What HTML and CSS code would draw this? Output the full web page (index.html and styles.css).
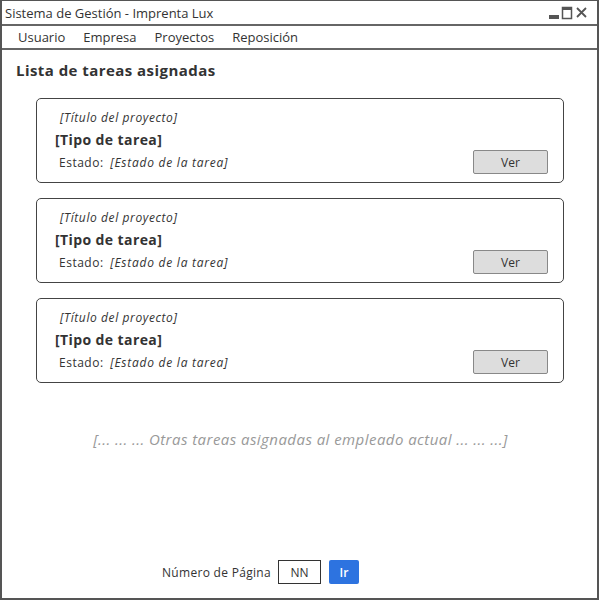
FILE: index.html
```html
<!DOCTYPE html>
<html lang="es">
<head>
<meta charset="utf-8">
<title>Sistema de Gestión - Imprenta Lux</title>
<link rel="stylesheet" href="styles.css">
</head>
<body>
<div class="window">
  <div class="titlebar">
    <span class="title">Sistema de Gestión - Imprenta Lux</span>
    <div class="controls">
      <svg width="48" height="14" viewBox="0 0 48 14">
        <rect x="2" y="9" width="10" height="4" fill="#555"/>
        <rect x="15.5" y="1.5" width="9" height="11" fill="none" stroke="#555" stroke-width="1.5"/>
        <rect x="15" y="1" width="10" height="3" fill="#555"/>
        <path d="M30 2 L39 11 M39 2 L30 11" stroke="#555" stroke-width="1.8"/>
      </svg>
    </div>
  </div>
  <nav class="menubar">
    <span class="menu-item">Usuario</span>
    <span class="menu-item">Empresa</span>
    <span class="menu-item">Proyectos</span>
    <span class="menu-item">Reposición</span>
  </nav>
  <main class="content">
    <h1 class="heading">Lista de tareas asignadas</h1>
    <div class="cards">
      <div class="card">
        <div class="project">[Título del proyecto]</div>
        <div class="task">[Tipo de tarea]</div>
        <div class="row">
          <div class="state"><span class="label">Estado:</span> <em>[Estado de la tarea]</em></div>
          <button class="btn">Ver</button>
        </div>
      </div>
      <div class="card">
        <div class="project">[Título del proyecto]</div>
        <div class="task">[Tipo de tarea]</div>
        <div class="row">
          <div class="state"><span class="label">Estado:</span> <em>[Estado de la tarea]</em></div>
          <button class="btn">Ver</button>
        </div>
      </div>
      <div class="card">
        <div class="project">[Título del proyecto]</div>
        <div class="task">[Tipo de tarea]</div>
        <div class="row">
          <div class="state"><span class="label">Estado:</span> <em>[Estado de la tarea]</em></div>
          <button class="btn">Ver</button>
        </div>
      </div>
    </div>
    <p class="more">[... ... ... Otras tareas asignadas al empleado actual ... ... ...]</p>
    <div class="pager">
      <span class="pager-label">Número de Página</span>
      <span class="page-box">NN</span>
      <button class="go">Ir</button>
    </div>
  </main>
</div>
</body>
</html>
```
FILE: styles.css
```css
* { box-sizing: border-box; }
html, body { margin: 0; padding: 0; background: #fff; }
body {
  font-family: "Open Sans", "Noto Sans", sans-serif;
  color: #333;
}
.window {
  width: 599px;
  height: 600px;
  border: 2px solid #555;
  border-top-width: 1px;
  display: flex;
  flex-direction: column;
}
.titlebar {
  height: 25px;
  border-bottom: 2px solid #666;
  display: flex;
  align-items: center;
  justify-content: space-between;
  padding: 0 0 0 3px;
}
.title { font-size: 13px; color: #333; }
.controls { display: flex; align-items: center; margin-right: 2px; margin-top: 1px; }
.menubar {
  height: 24px;
  border-bottom: 2px solid #666;
  display: flex;
  align-items: center;
  padding-left: 16px;
}
.menu-item { font-size: 13px; margin-right: 18px; color: #333; }
.content {
  flex: 1;
  display: flex;
  flex-direction: column;
}
.heading {
  font-size: 15px;
  font-weight: 700;
  margin: 10px 0 0 14px;
  color: #333;
  letter-spacing: 0.45px;
}
.cards {
  display: flex;
  flex-direction: column;
  gap: 15px;
  margin: 18px 0 0 34px;
  width: 528px;
}
.card {
  height: 85px;
  border: 1.5px solid #444;
  border-radius: 5px;
  padding: 10px 15px 0 18px;
}
.project {
  font-size: 12px;
  font-style: italic;
  margin-left: 5px;
  line-height: 17px;
  letter-spacing: 0.6px;
}
.task {
  font-size: 14px;
  font-weight: 700;
  line-height: 20px;
  margin-top: 4px;
  letter-spacing: 0.4px;
}
.row {
  display: flex;
  justify-content: space-between;
  align-items: center;
}
.state { font-size: 12px; margin-left: 4px; letter-spacing: 0.5px; }
.state em { margin-left: 3px; letter-spacing: 0.75px; }
.btn {
  width: 75px;
  height: 24px;
  background: #ddd;
  border: 1px solid #888;
  border-radius: 2px;
  font-family: inherit;
  font-size: 12px;
  color: #333;
  padding: 0;
}
.more {
  text-align: center;
  font-size: 15px;
  font-style: italic;
  color: #999;
  margin: 46px 0 0 0;
  padding-left: 2px;
  letter-spacing: 0.45px;
}
.pager {
  margin-top: auto;
  margin-bottom: 14px;
  display: flex;
  align-items: center;
  padding-left: 160px;
}
.pager-label { font-size: 12px; color: #333; margin-right: 7px; letter-spacing: 0.3px; }
.page-box {
  width: 43px;
  height: 24px;
  border: 1.5px solid #333;
  display: flex;
  align-items: center;
  justify-content: center;
  font-size: 12px;
  margin-right: 8px;
}
.go {
  width: 30px;
  height: 24px;
  background: #2d73e0;
  color: #fff;
  border: none;
  border-radius: 2px;
  font-family: inherit;
  font-size: 12px;
  font-weight: 600;
  padding: 0;
}
```
